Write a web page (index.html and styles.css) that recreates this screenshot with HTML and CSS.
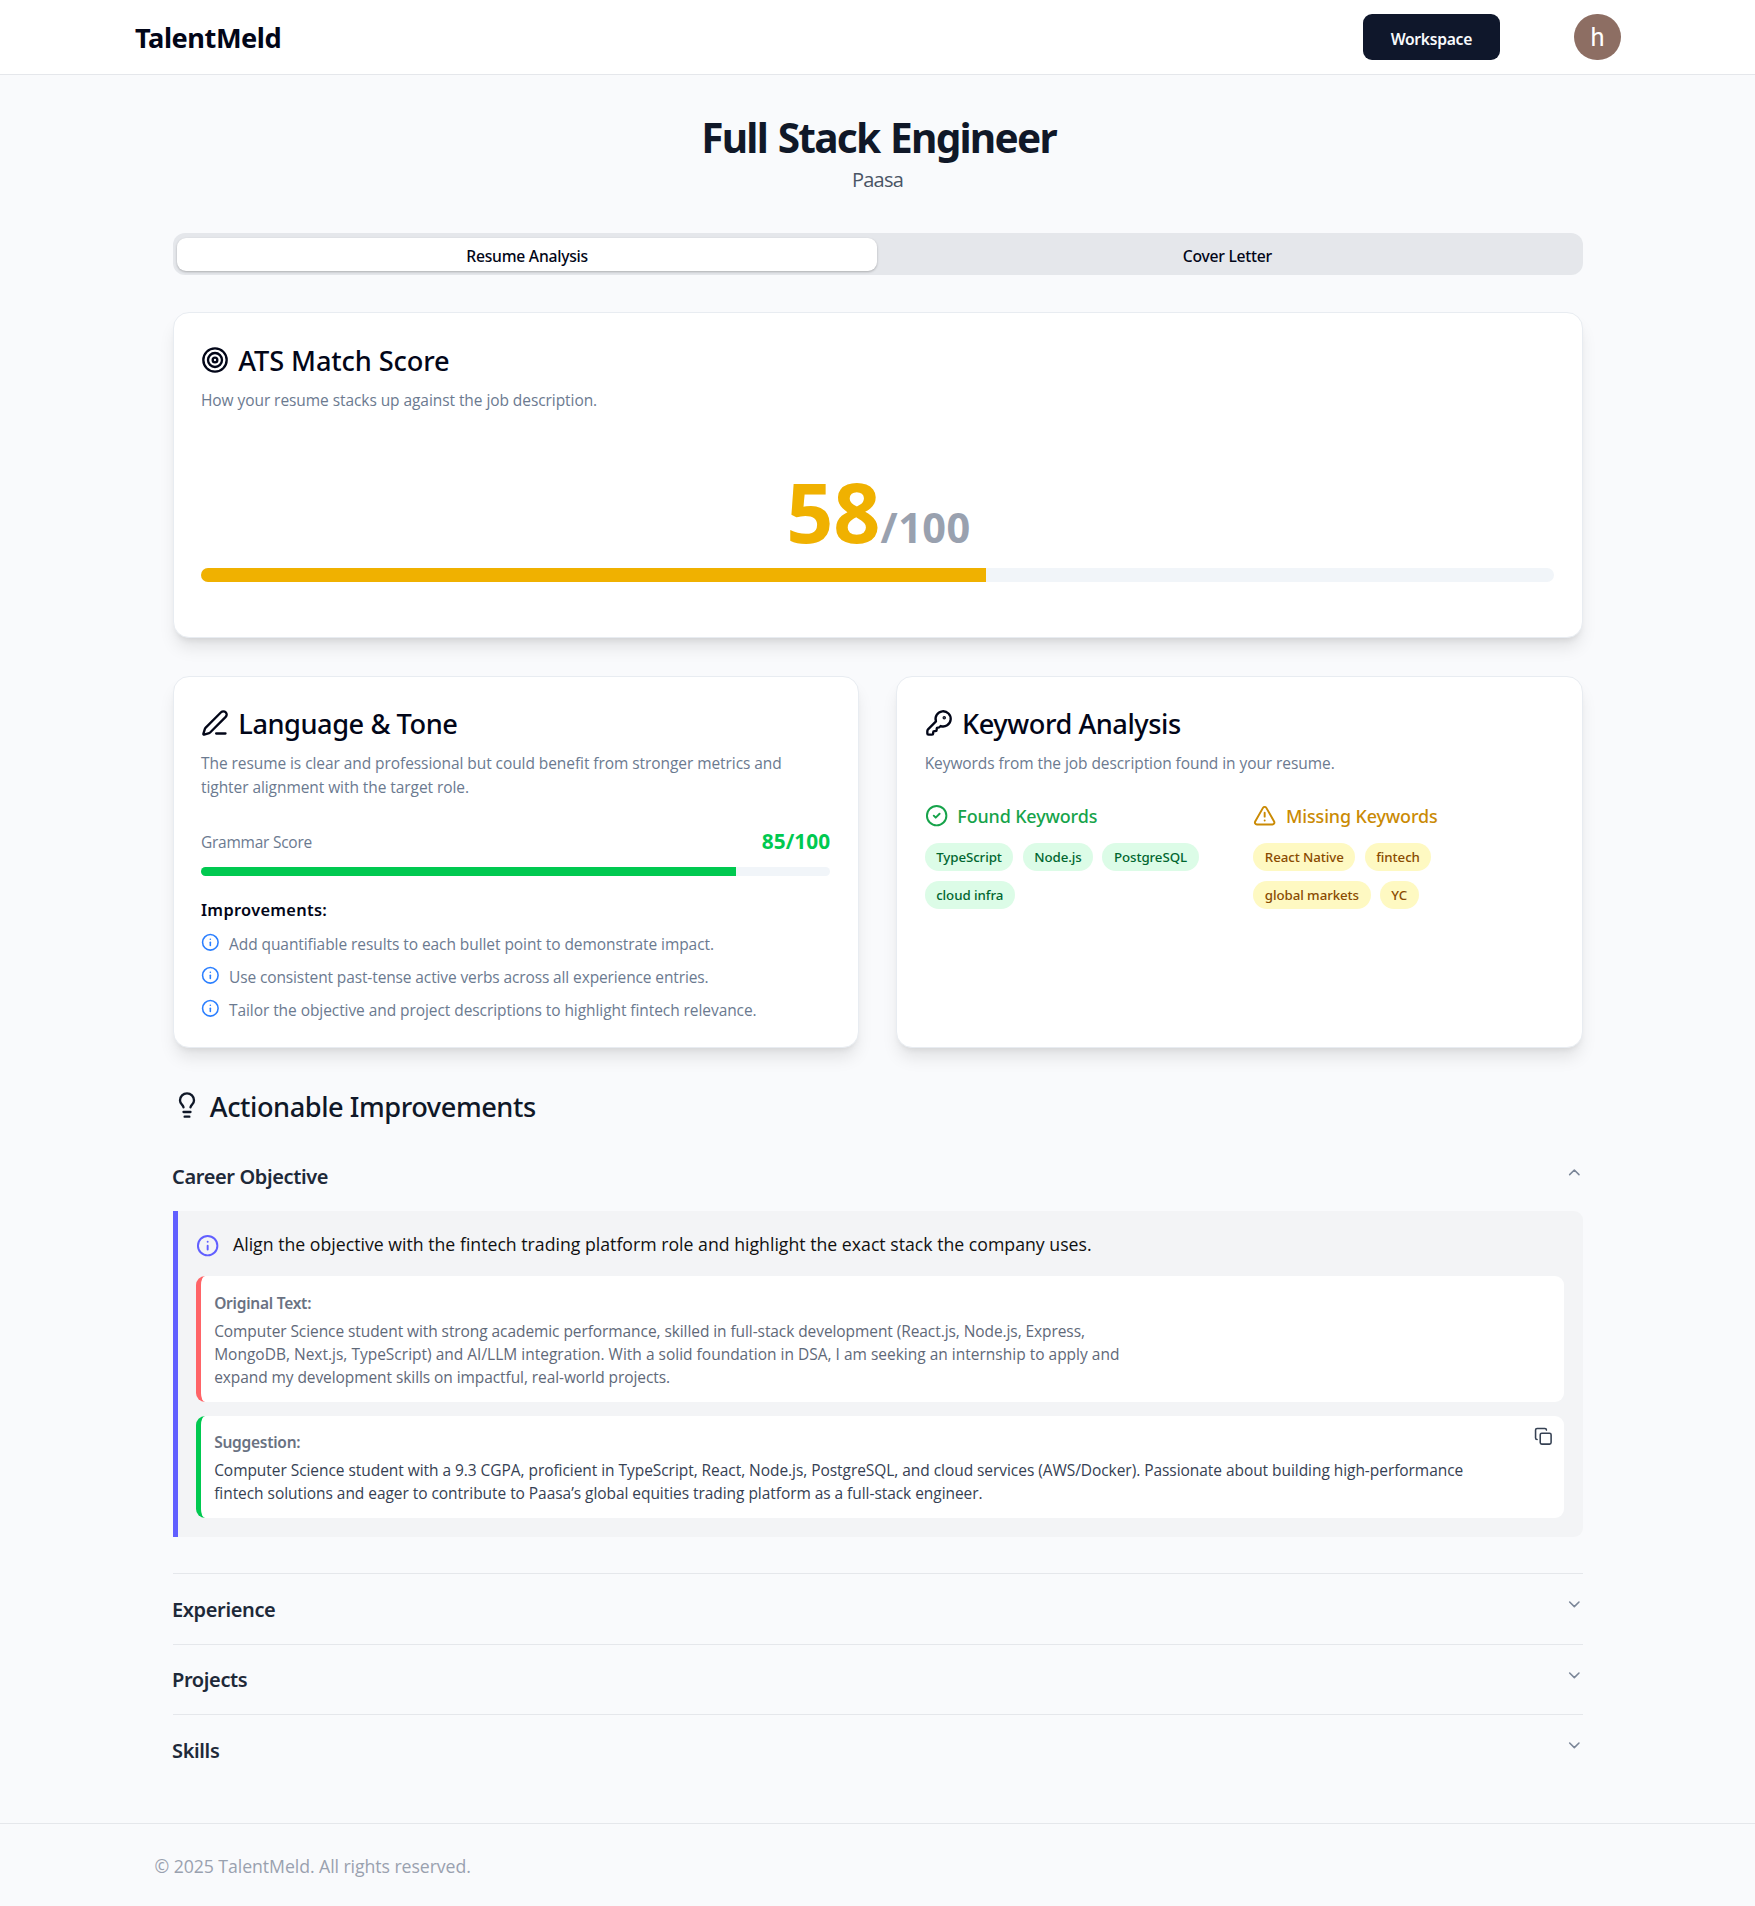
FILE: index.html
```html
<!DOCTYPE html>
<html lang="en">
<head>
<meta charset="utf-8">
<title>TalentMeld</title>
<link rel="stylesheet" href="styles.css">
</head>
<body>
<header class="header">
  <a class="brand">TalentMeld</a>
  <div class="header-actions">
    <button class="workspace-btn" type="button">Workspace</button>
    <div class="avatar">h</div>
  </div>
</header>

<main class="main">
  <div class="hero">
    <h1>Full Stack Engineer</h1>
    <p>Paasa</p>
  </div>

  <div class="tabs">
    <div class="tab tab-active">Resume Analysis</div>
    <div class="tab">Cover Letter</div>
  </div>

  <section class="card score-card">
    <h2 class="card-title">
      <svg class="icon icon-lg" viewBox="0 0 24 24"><circle cx="12" cy="12" r="10"/><circle cx="12" cy="12" r="6"/><circle cx="12" cy="12" r="2"/></svg>
      <span class="title-wide">ATS Match Score</span>
    </h2>
    <p class="desc">How your resume stacks up against the job description.</p>
    <div class="score"><span class="score-value">58</span><span class="score-max">/100</span></div>
    <div class="bar bar-score"><div class="fill fill-yellow" style="width:58%"></div></div>
  </section>

  <div class="card-grid">
    <section class="card">
      <h2 class="card-title">
        <svg class="icon icon-lg" viewBox="0 0 24 24"><path d="M13 21h8"/><path d="M21.174 6.812a1 1 0 0 0-3.986-3.987L3.842 16.174a2 2 0 0 0-.5.83l-1.321 4.352a.5.5 0 0 0 .623.622l4.353-1.32a2 2 0 0 0 .83-.497z"/></svg>
        <span>Language &amp; Tone</span>
      </h2>
      <p class="desc">The resume is clear and professional but could benefit from stronger metrics and<br>tighter alignment with the target role.</p>
      <div class="grammar">
        <span class="grammar-label">Grammar Score</span>
        <span class="grammar-value">85/100</span>
      </div>
      <div class="bar"><div class="fill fill-green" style="width:85%"></div></div>
      <h3 class="improve-title">Improvements:</h3>
      <ul class="improve-list">
        <li><svg class="icon icon-sm blue" viewBox="0 0 24 24"><circle cx="12" cy="12" r="10"/><path d="M12 16v-4"/><path d="M12 8h.01"/></svg><span>Add quantifiable results to each bullet point to demonstrate impact.</span></li>
        <li><svg class="icon icon-sm blue" viewBox="0 0 24 24"><circle cx="12" cy="12" r="10"/><path d="M12 16v-4"/><path d="M12 8h.01"/></svg><span class="tight">Use consistent past-tense active verbs across all experience entries.</span></li>
        <li><svg class="icon icon-sm blue" viewBox="0 0 24 24"><circle cx="12" cy="12" r="10"/><path d="M12 16v-4"/><path d="M12 8h.01"/></svg><span>Tailor the objective and project descriptions to highlight fintech relevance.</span></li>
      </ul>
    </section>

    <section class="card">
      <h2 class="card-title">
        <svg class="icon icon-lg" viewBox="0 0 24 24"><path d="M2.586 17.414A2 2 0 0 0 2 18.828V21a1 1 0 0 0 1 1h3a1 1 0 0 0 1-1v-1a1 1 0 0 1 1-1h1a1 1 0 0 0 1-1v-1a1 1 0 0 1 1-1h.172a2 2 0 0 0 1.414-.586l.814-.814a6.5 6.5 0 1 0-4-4z"/><circle cx="16.5" cy="7.5" r=".5" fill="currentColor"/></svg>
        <span>Keyword Analysis</span>
      </h2>
      <p class="desc">Keywords from the job description found in your resume.</p>
      <div class="keywords">
        <div>
          <h3 class="kw-title kw-found"><svg class="icon icon-md" viewBox="0 0 24 24"><circle cx="12" cy="12" r="10"/><path d="m9 12 2 2 4-4"/></svg>Found Keywords</h3>
          <div class="pills pills-green"><span>TypeScript</span><span>Node.js</span><span>PostgreSQL</span><span>cloud infra</span></div>
        </div>
        <div>
          <h3 class="kw-title kw-missing"><svg class="icon icon-md" viewBox="0 0 24 24"><path d="m21.73 18-8-14a2 2 0 0 0-3.48 0l-8 14A2 2 0 0 0 4 21h16a2 2 0 0 0 1.73-3"/><path d="M12 9v4"/><path d="M12 17h.01"/></svg>Missing Keywords</h3>
          <div class="pills pills-yellow"><span>React Native</span><span>fintech</span><span>global markets</span><span>YC</span></div>
        </div>
      </div>
    </section>
  </div>

  <h2 class="section-title">
    <svg class="icon icon-lg" viewBox="0 0 24 24"><path d="M15 14c.2-1 .7-1.7 1.5-2.5 1-.9 1.5-2.2 1.5-3.5A6 6 0 0 0 6 8c0 1 .2 2.2 1.5 3.5.7.7 1.3 1.5 1.5 2.5"/><path d="M9 18h6"/><path d="M10 22h4"/></svg>
    <span>Actionable Improvements</span>
  </h2>

  <div class="accordion">
    <div class="item item-open">
      <div class="trigger"><span>Career Objective</span><svg class="icon icon-sm chevron" viewBox="0 0 24 24"><path d="m18 15-6-6-6 6"/></svg></div>
      <div class="panel">
        <div class="tip">
          <svg class="icon icon-md" viewBox="0 0 24 24"><circle cx="12" cy="12" r="10"/><path d="M12 16v-4"/><path d="M12 8h.01"/></svg>
          <p>Align the objective with the fintech trading platform role and highlight the exact stack the company uses.</p>
        </div>
        <div class="note note-original">
          <h4>Original Text:</h4>
          <p><span class="snug">Computer Science student with strong academic performance, skilled in full-stack development (React.js, Node.js, Express,</span><br>MongoDB, Next.js, TypeScript) and AI/LLM integration. With a solid foundation in DSA, I am seeking an internship to apply and<br><span class="snug">expand my development skills on impactful, real-world projects.</span></p>
        </div>
        <div class="note note-suggestion">
          <svg class="icon icon-sm copy" viewBox="0 0 24 24"><rect width="14" height="14" x="8" y="8" rx="2" ry="2"/><path d="M4 16c-1.1 0-2-.9-2-2V4c0-1.1.9-2 2-2h10c1.1 0 2 .9 2 2"/></svg>
          <h4>Suggestion:</h4>
          <p>Computer Science student with a 9.3 CGPA, proficient in TypeScript, React, Node.js, PostgreSQL, and cloud services (AWS/Docker). Passionate about building high-performance<br>fintech solutions and eager to contribute to Paasa’s global equities trading platform as a full-stack engineer.</p>
        </div>
      </div>
    </div>
    <div class="item"><div class="trigger"><span>Experience</span><svg class="icon icon-sm chevron" viewBox="0 0 24 24"><path d="m6 9 6 6 6-6"/></svg></div></div>
    <div class="item"><div class="trigger"><span>Projects</span><svg class="icon icon-sm chevron" viewBox="0 0 24 24"><path d="m6 9 6 6 6-6"/></svg></div></div>
    <div class="item"><div class="trigger"><span>Skills</span><svg class="icon icon-sm chevron" viewBox="0 0 24 24"><path d="m6 9 6 6 6-6"/></svg></div></div>
  </div>
</main>

<footer class="footer">© 2025 TalentMeld. All rights reserved.</footer>
</body>
</html>
```
FILE: styles.css
```css
* { box-sizing: border-box; margin: 0; padding: 0; }

body {
  min-height: 1906px;
  background: #f9fafc;
  color: #020618;
  font-family: "Open Sans", "Noto Sans", sans-serif;
  font-size: 15.5px;
  line-height: 23.33px;
  letter-spacing: -0.07px;
  display: flex;
  flex-direction: column;
}

h1, h2, h3, h4, .brand, .tab, .trigger, .pills, .workspace-btn {
  font-family: "Noto Sans", "Open Sans", sans-serif;
}

.icon {
  flex: none;
  fill: none;
  stroke: currentColor;
  stroke-width: 2;
  stroke-linecap: round;
  stroke-linejoin: round;
}
.icon-lg { width: 28px; height: 28px; }
.icon-md { width: 23.33px; height: 23.33px; }
.icon-sm { width: 18.67px; height: 18.67px; }

.header {
  height: 75px;
  padding: 0 134.3px 0 135px;
  background: #fff;
  border-bottom: 1px solid #e5e7eb;
  display: flex;
  align-items: center;
  justify-content: space-between;
}
.brand {
  padding-top: 1px;
  font-size: 27.2px;
  font-weight: 700;
  line-height: 37px;
  letter-spacing: -0.45px;
}
.header-actions { display: flex; align-items: center; gap: 74px; }
.workspace-btn {
  width: 137.5px;
  height: 46.5px;
  padding-top: 3px;
  border: 0;
  border-radius: 9px;
  background: #0f172b;
  color: #f8fafc;
  font-size: 15.7px;
  font-weight: 600;
  letter-spacing: -0.3px;
}
.avatar {
  width: 46.6px;
  height: 46.6px;
  border-radius: 50%;
  background: #8d6e63;
  color: #fff;
  font: 400 25.5px/46.6px Roboto, sans-serif;
  letter-spacing: 0;
  text-align: center;
}

.main {
  width: 1410px;
  margin: 0 auto;
  padding-top: 38.5px;
}

.hero { text-align: center; }
.hero h1 {
  color: #101828;
  font-size: 40.6px;
  font-weight: 700;
  line-height: 47px;
  letter-spacing: -1.77px;
  word-spacing: 2px;
  margin-right: -2px;
}
.hero p {
  margin-top: 3.7px;
  color: #4a5565;
  font-size: 20px;
  line-height: 32.67px;
  letter-spacing: -0.8px;
}

.tabs {
  height: 42px;
  margin-top: 36px;
  padding: 5px 5px 4px 4.5px;
  border-radius: 12px;
  background: #e5e7eb;
  display: grid;
  grid-template-columns: 1fr 1fr;
}
.tab {
  padding-top: 3px;
  border-radius: 9px;
  font-size: 15.7px;
  font-weight: 500;
  line-height: 30px;
  letter-spacing: -0.25px;
  text-align: center;
}
.tab-active {
  background: #fff;
  box-shadow: 0 1px 3px rgb(0 0 0 / .14), 0 1px 2px rgb(0 0 0 / .12);
}

.card {
  padding: 28.5px 27.5px 25px;
  border: 1px solid #e8ecf1;
  border-radius: 16px;
  background: #fff;
  box-shadow: 0 11.6px 17.5px -3.5px rgb(0 0 0 / .1), 0 4.6px 7px -4.6px rgb(0 0 0 / .1);
}
.card-title, .section-title {
  display: flex;
  align-items: center;
  gap: 9.33px;
  font-size: 27.2px;
  font-weight: 500;
  line-height: 37.33px;
  letter-spacing: -0.45px;
}
.card-title .icon, .section-title .icon { margin-top: -1.5px; }
.title-wide { letter-spacing: -0.12px; }
.desc { margin-top: 10px; color: #6b7a90; }

.score-card { margin-top: 37.5px; padding-bottom: 55.3px; }
.score {
  margin-top: 56.8px;
  padding-left: 2px;
  line-height: 84px;
  height: 84px;
  text-align: center;
  font-weight: 700;
  letter-spacing: 0;
}
.score-value { color: #f0b100; font-size: 82.5px; }
.score-max { color: #99a1af; font-size: 41.5px; letter-spacing: 0.5px; }

.bar {
  height: 9.33px;
  margin-top: 9px;
  border-radius: 99px;
  background: #f1f5f9;
  overflow: hidden;
}
.bar-score { height: 14px; margin-top: 14.7px; }
.fill { height: 100%; }
.fill-yellow { background: #f0b100; }
.fill-green { background: #00c950; }

.card-grid {
  margin-top: 37.3px;
  display: grid;
  grid-template-columns: 1fr 1fr;
  gap: 37.33px;
}

.grammar {
  margin-top: 26px;
  display: flex;
  align-items: center;
  justify-content: space-between;
}
.grammar-label { padding-top: 3px; color: #6b7a90; letter-spacing: -0.25px; }
.grammar-value {
  color: #00c950;
  font-size: 20.8px;
  font-weight: 700;
  line-height: 32.67px;
  letter-spacing: 0.1px;
}
.improve-title {
  margin-top: 22.3px;
  font-size: 16.4px;
  font-weight: 600;
  letter-spacing: 0.3px;
}
.improve-list {
  margin-top: 11.7px;
  list-style: none;
  color: #6b7a90;
  display: flex;
  flex-direction: column;
  gap: 9.33px;
}
.improve-list li { display: flex; align-items: flex-start; gap: 9.33px; }
.tight { letter-spacing: -0.12px; }
.snug { letter-spacing: -0.08px; }
.blue { color: #2b7fff; }

.keywords {
  margin-top: 26.7px;
  display: grid;
  grid-template-columns: 1fr 1fr;
  gap: 28px;
}
.kw-title {
  display: flex;
  align-items: center;
  gap: 9.33px;
  font-size: 17.9px;
  font-weight: 500;
  line-height: 28px;
  letter-spacing: -0.12px;
}
.kw-title .icon { margin-top: -2px; }
.kw-found { color: #16a34a; }
.kw-missing { color: #ca8a04; }
.pills {
  margin-top: 13px;
  display: flex;
  flex-wrap: wrap;
  gap: 9.33px;
}
.pills span {
  padding: 1px 11.5px 0;
  border-radius: 99px;
  font-size: 13.3px;
  font-weight: 550;
  line-height: 27px;
  letter-spacing: -0.08px;
}
.pills-green span { background: #dcfce7; color: #016630; }
.pills-yellow span { background: #fef9c2; color: #894b00; }

.section-title { margin-top: 38.5px; color: #101828; }
.section-title span { padding-top: 1px; }

.accordion { margin-top: 16.9px; }
.item + .item { border-top: 1px solid #e5e7eb; }
.item-open { padding-bottom: 36.5px; }
.trigger {
  height: 69.5px;
  padding-top: 18.67px;
  display: flex;
  align-items: flex-start;
  justify-content: space-between;
  color: #1e2939;
  font-size: 20px;
  font-weight: 600;
  line-height: 34.4px;
  letter-spacing: -0.37px;
}
.trigger span { margin-left: -0.5px; }
.chevron { margin: 2.5px -0.7px 0 0; color: #7b8698; }

.panel {
  padding: 18.67px;
  border-left: 5px solid #615fff;
  border-radius: 0 9px 9px 0;
  background: #f3f4f6;
}
.tip {
  display: flex;
  align-items: flex-start;
  gap: 13.5px;
  color: #101010;
  font-size: 17.7px;
  line-height: 28px;
}
.tip .icon { margin-top: 4px; color: #615fff; }
.tip p { letter-spacing: 0; }
.note {
  position: relative;
  padding: 15.3px 13px 12.2px;
  border-left: 5px solid;
  border-radius: 9px;
  background: #fff;
}
.note-original { margin-top: 18.5px; border-color: #ff6467; }
.note-suggestion { margin-top: 14px; border-color: #00c950; }
.note h4 {
  color: #6a7282;
  font-size: 15.5px;
  font-weight: 600;
  letter-spacing: -0.25px;
}
.note p { margin-top: 4.67px; }
.note-original p { color: #5f6979; letter-spacing: 0; }
.note-original .snug { letter-spacing: -0.08px; }
.note-suggestion p { color: #364153; letter-spacing: -0.053px; }
.copy { position: absolute; top: 11.4px; right: 11.2px; color: #364153; }

.footer {
  margin-top: 38px;
  padding: 28px 154.5px;
  border-top: 1px solid #e5e7eb;
  color: #99a1af;
  font-size: 17.7px;
  line-height: 28px;
  letter-spacing: -0.07px;
}
```
